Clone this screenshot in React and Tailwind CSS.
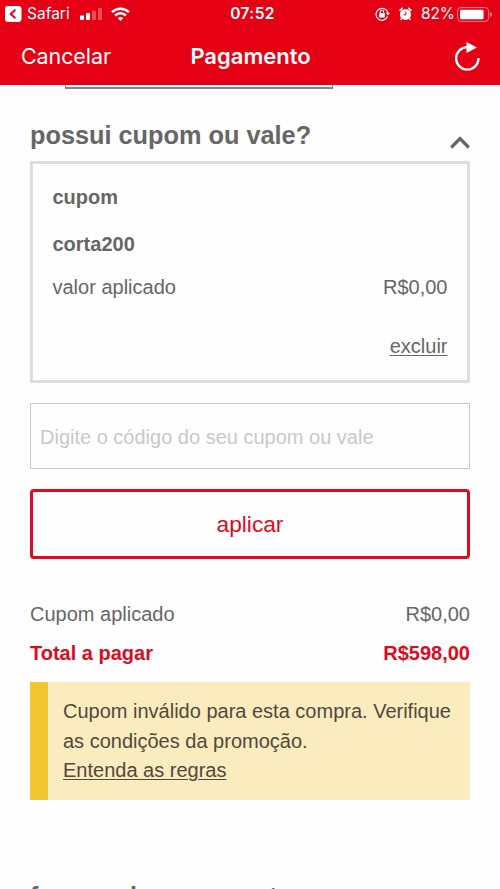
import React from "react";

const sans = "font-['Helvetica_Neue','Liberation_Sans',sans-serif]";

function StatusBar() {
  return (
    <div className="grid h-[28px] grid-cols-[1fr_auto_1fr] items-center pl-[5px] pr-[7px] text-[16px] leading-[28px]">
      <div className="flex items-center">
        <svg width="17" height="16" viewBox="0 0 17 16">
          <rect width="16.5" height="16" rx="3" fill="#fff" />
          <path d="M10.400 3.600 5.800 8l4.600 4.400" fill="none" stroke="#e60014" strokeWidth="2" />
        </svg>
        <span className="ml-[5px] w-[43px] whitespace-nowrap text-[15.500px]">Safari</span>
        <svg className="ml-[10px]" width="22" height="14" viewBox="0 0 22 14" fill="#fff">
          <rect x="0" y="8.500" width="4" height="4.500" rx=".8" />
          <rect x="6" y="6" width="4" height="7" rx=".8" />
          <rect x="12" y="3.500" width="4" height="9.500" rx=".8" opacity=".3" />
          <rect x="18" y="1" width="4" height="12" rx=".8" opacity=".3" />
        </svg>
        <svg className="ml-[9px]" width="19" height="14" viewBox="0 0 19 14" fill="none" stroke="#fff" strokeWidth="2.500">
          <path d="M1 5.200a12.200 12.200 0 0 1 17 0" />
          <path d="M4.100 8.500a7.600 7.600 0 0 1 10.800 0" />
          <path d="M6.800 11.200a3.900 3.900 0 0 1 5.400 0L9.500 14z" fill="#fff" stroke="none" />
        </svg>
      </div>
      <span className="ml-[7px] text-[15.500px] font-semibold tracking-[0.400px]">07:52</span>
      <div className="flex items-center justify-end">
        <svg width="15" height="14" viewBox="0 0 15 14" fill="none" stroke="#fff">
          <path d="M12.600 9.600A6 6 0 1 1 12.900 6" strokeWidth="1.200" />
          <path d="M10.800 5.800h4.200l-2.100 2.800z" fill="#fff" stroke="none" />
          <rect x="4.100" y="6.200" width="5.800" height="4.200" rx=".5" fill="#fff" stroke="none" />
          <path d="M5.300 6.500V5a1.700 1.700 0 0 1 3.400 0v1.500" strokeWidth="1.100" />
        </svg>
        <svg className="ml-[9px]" width="13" height="14" viewBox="0 0 13 14">
          <circle cx="6.500" cy="7.400" r="5.500" fill="#fff" />
          <path d="M1 3.300 3.200 1.300M12 3.300 9.800 1.300" stroke="#fff" strokeWidth="1.700" strokeLinecap="round" />
          <path d="m2.600 11.500-1.100 1.500m8.900-1.500 1.100 1.500" stroke="#fff" strokeWidth="1.300" />
          <path d="M6.800 4.500v3.300H4.500" fill="none" stroke="#e60014" strokeWidth="1" />
        </svg>
        <span className="ml-[9px] w-[33px] whitespace-nowrap text-[15.500px] tracking-[-0.200px]">82%</span>
        <svg className="ml-[3px]" width="36" height="15" viewBox="0 0 36 15">
          <rect x=".6" y=".6" width="31" height="13.800" rx="3.400" fill="none" stroke="#fff" strokeOpacity=".5" />
          <rect x="3" y="2.800" width="23.500" height="9.400" rx="1.200" fill="#fff" />
          <path d="M33.300 5c2 .7 2 4.300 0 5z" fill="#fff" fillOpacity=".6" />
        </svg>
      </div>
    </div>
  );
}

function NavBar() {
  return (
    <div className="grid h-[57px] grid-cols-[1fr_auto_1fr] items-center pl-[21px] pr-[20px] text-[21.500px] leading-[57px]">
      <span className="tracking-[-0.100px]">Cancelar</span>
      <span className="text-[22px] font-semibold">Pagamento</span>
      <svg className="justify-self-end" width="26" height="30" viewBox="0 0 26 30">
        <path d="M13.500 5.200A11.200 11.200 0 1 0 24.500 16" fill="none" stroke="#fff" strokeWidth="2.300" />
        <path d="M12.500 0 23 5.500 12.500 11z" fill="#fff" />
      </svg>
    </div>
  );
}

export default function App() {
  return (
    <div className={`h-[889px] w-[500px] overflow-hidden bg-[#fefefe] text-[20px] text-[#666] ${sans}`}>
      <header className="h-[85px] bg-[#e60014] font-['Inter',sans-serif] text-white">
        <StatusBar />
        <NavBar />
      </header>

      <div className="ml-[65px] h-[4px] w-[268px] border-x border-b-2 border-[#84828a]" />

      <main className="px-[30px]">
        <div className="flex h-[72px] justify-between">
          <h2 className="mt-[31px] text-[25.300px] font-bold leading-[30px]">possui cupom ou vale?</h2>
          <svg className="mt-[46px]" width="20" height="14" viewBox="0 0 20 14">
            <path d="m1.200 12.500 8.800-8.800 8.800 8.800" fill="none" stroke="#666" strokeWidth="3.300" />
          </svg>
        </div>

        <section className="h-[222px] border-[3px] border-[#dedede] px-[19.500px] pt-[21px]">
          <p className="h-[47px] font-bold leading-[24px]">cupom</p>
          <p className="h-[43px] font-bold leading-[24px]">corta200</p>
          <div className="flex h-[59px] justify-between leading-[24px]">
            <span>valor aplicado</span>
            <span>R$0,00</span>
          </div>
          <div className="text-right leading-[24px]">
            <a className="underline decoration-1 underline-offset-2">excluir</a>
          </div>
        </section>

        <input
          className="mt-[20px] block h-[66px] w-full border border-[#c8c8c8] px-[9px] pt-[2px] text-[20px] placeholder:text-[#c9c9c9] placeholder:opacity-100"
          placeholder="Digite o código do seu cupom ou vale"
        />
        <button className="mt-[20px] block h-[70px] w-full rounded-[4px] border-[3px] border-[#e00a20] text-[22.700px] text-[#e00a20]">
          aplicar
        </button>

        <div className="mt-[43px] flex justify-between leading-[24px]">
          <span>Cupom aplicado</span>
          <span>R$0,00</span>
        </div>
        <div className="mt-[15px] flex justify-between font-bold leading-[24px] text-[#e00a20]">
          <span>Total a pagar</span>
          <span>R$598,00</span>
        </div>

        <div className="mt-[17px] h-[118px] border-l-[18px] border-[#f0c530] bg-[#faecbf] pl-[15px] pt-[15px] leading-[29.500px] text-[#51493a]">
          <p className="whitespace-nowrap">Cupom inválido para esta compra. Verifique</p>
          <p>as condições da promoção.</p>
          <a className="underline decoration-1 underline-offset-2">Entenda as regras</a>
        </div>

        <h2 className="mt-[81px] text-[25.300px] font-bold leading-[30px]">formas de pagamento</h2>
      </main>
    </div>
  );
}
